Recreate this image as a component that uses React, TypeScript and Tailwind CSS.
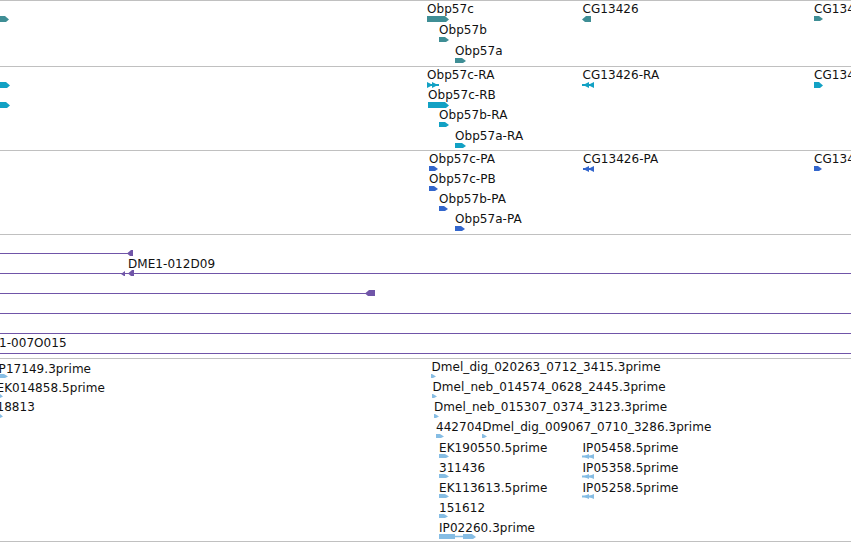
import React from "react";

type Kind = "fwd" | "rev" | "fwd2" | "rev2" | "split";
type Feat = { x: number; y: number; w: number; h: number; k: Kind };
type Lab = { x: number; c: number; t: string };

function Shape({ k, w, h }: { k: Kind; w: number; h: number }) {
  const m = h / 2;
  if (k === "fwd") {
    const a = Math.max(0, w - 4);
    return <polygon points={`0,0 ${a},0 ${w},${m + 0.5} ${Math.max(0, w - 3)},${h} 0,${h}`} />;
  }
  if (k === "rev") {
    const a = Math.min(w, 4);
    return <polygon points={`${w},0 ${a},0 0,${m + 0.5} ${Math.min(w, 3)},${h} ${w},${h}`} />;
  }
  if (k === "fwd2") {
    return (
      <>
        <rect x={0} y={m - 1} width={w} height={2} />
        <polygon points={`0,0 6,${m} 0,${h}`} />
        <polygon points={`5,0 11,${m} 5,${h}`} />
      </>
    );
  }
  if (k === "rev2") {
    return (
      <>
        <rect x={0} y={m - 1} width={w} height={2} />
        <polygon points={`${w},0 ${w - 6},${m} ${w},${h}`} />
        <polygon points={`${w - 5},0 ${w - 11},${m} ${w - 5},${h}`} />
      </>
    );
  }
  return (
    <>
      <polygon points={`0,0 16,0 16,${h} 0,${h}`} />
      <rect x={16} y={m - 0.75} width={8} height={1.5} />
      <polygon points={`24,0 ${w - 4},0 ${w},${m + 0.5} ${w - 3},${h} 24,${h}`} />
    </>
  );
}

function Features({ feats, top, color }: { feats: Feat[]; top: number; color: string }) {
  return (
    <>
      {feats.map((f, i) => (
        <svg
          key={i}
          className="absolute"
          style={{ left: f.x, top: f.y - top }}
          width={f.w}
          height={f.h}
          fill={color}
        >
          <Shape k={f.k} w={f.w} h={f.h} />
        </svg>
      ))}
    </>
  );
}

function Labels({ labels, top }: { labels: Lab[]; top: number }) {
  return (
    <>
      {labels.map((l, i) => (
        <span
          key={i}
          className="absolute whitespace-nowrap text-[12px] leading-[14px] tracking-[0.05px] text-[#111] font-['DejaVu_Sans',sans-serif]"
          style={{ left: l.x, top: l.c - 2.4 - top }}
        >
          {l.t}
        </span>
      ))}
    </>
  );
}

const TEAL = "#3f8e95";
const CYAN = "#12a1c4";
const BLUE = "#3366cc";
const PURPLE = "#7055a8";
const LBLUE = "#86bde4";

const t1Feats: Feat[] = [
  { x: 0, y: 16, w: 9, h: 6, k: "fwd" },
  { x: 427, y: 16, w: 22, h: 6, k: "fwd" },
  { x: 439, y: 37, w: 10, h: 5, k: "fwd" },
  { x: 455, y: 58, w: 11, h: 5, k: "fwd" },
  { x: 582, y: 16, w: 9, h: 6, k: "rev" },
  { x: 814, y: 16, w: 9, h: 5, k: "fwd" },
];
const t1Labels: Lab[] = [
  { x: 427, c: 4, t: "Obp57c" },
  { x: 439, c: 25.5, t: "Obp57b" },
  { x: 455, c: 46.5, t: "Obp57a" },
  { x: 582.5, c: 4, t: "CG13426" },
  { x: 814, c: 4, t: "CG13427" },
];

const t2Feats: Feat[] = [
  { x: 0, y: 82, w: 10, h: 6, k: "fwd" },
  { x: 0, y: 102, w: 10, h: 6, k: "fwd" },
  { x: 427, y: 82, w: 12, h: 6, k: "fwd2" },
  { x: 428, y: 102, w: 21, h: 6, k: "fwd" },
  { x: 439, y: 122, w: 10, h: 5, k: "fwd" },
  { x: 455, y: 143, w: 11, h: 5, k: "fwd" },
  { x: 582, y: 82, w: 12, h: 6, k: "rev2" },
  { x: 814, y: 82, w: 9, h: 6, k: "fwd" },
];
const t2Labels: Lab[] = [
  { x: 427, c: 70, t: "Obp57c-RA" },
  { x: 428, c: 90.5, t: "Obp57c-RB" },
  { x: 439, c: 110.5, t: "Obp57b-RA" },
  { x: 455, c: 131, t: "Obp57a-RA" },
  { x: 582.5, c: 70, t: "CG13426-RA" },
  { x: 814, c: 70, t: "CG13427-RA" },
];

const t3Feats: Feat[] = [
  { x: 429, y: 166, w: 9, h: 5, k: "fwd" },
  { x: 429, y: 186, w: 9, h: 5, k: "fwd" },
  { x: 439, y: 206, w: 9, h: 5, k: "fwd" },
  { x: 455, y: 226, w: 10, h: 5, k: "fwd" },
  { x: 583, y: 166, w: 11, h: 6, k: "rev2" },
  { x: 814, y: 166, w: 8, h: 5, k: "fwd" },
];
const t3Labels: Lab[] = [
  { x: 429, c: 154.5, t: "Obp57c-PA" },
  { x: 429, c: 174.5, t: "Obp57c-PB" },
  { x: 439, c: 194.5, t: "Obp57b-PA" },
  { x: 455, c: 214.5, t: "Obp57a-PA" },
  { x: 583, c: 154.5, t: "CG13426-PA" },
  { x: 814, c: 154.5, t: "CG13427-PA" },
];

const t4Lines = [
  { y: 253, x: 0, w: 128 },
  { y: 273, x: 0, w: 851 },
  { y: 293, x: 0, w: 366 },
  { y: 313, x: 0, w: 851 },
  { y: 333, x: 0, w: 851 },
  { y: 353, x: 0, w: 851 },
];
const t4Feats: Feat[] = [
  { x: 127, y: 250, w: 6, h: 6, k: "rev" },
  { x: 121, y: 271, w: 4, h: 5, k: "rev" },
  { x: 128, y: 270, w: 6, h: 6, k: "rev" },
  { x: 365, y: 290, w: 10, h: 6, k: "rev" },
];
const t4Labels: Lab[] = [
  { x: 128, c: 259, t: "DME1-012D09" },
  { x: -1, c: 338, t: "1-007O015" },
];

const t5Feats: Feat[] = [
  { x: 0, y: 374, w: 8, h: 4, k: "fwd" },
  { x: 0, y: 394, w: 3, h: 4, k: "fwd" },
  { x: 0, y: 414, w: 3, h: 4, k: "fwd" },
  { x: 431, y: 374, w: 5, h: 4, k: "fwd" },
  { x: 432, y: 394, w: 5, h: 4, k: "fwd" },
  { x: 434, y: 414, w: 5, h: 4, k: "fwd" },
  { x: 436, y: 434, w: 8, h: 4, k: "fwd" },
  { x: 482, y: 434, w: 5, h: 4, k: "fwd" },
  { x: 439, y: 454, w: 10, h: 4, k: "fwd" },
  { x: 439, y: 474, w: 10, h: 4, k: "fwd" },
  { x: 439, y: 494, w: 10, h: 4, k: "fwd" },
  { x: 439, y: 514, w: 9, h: 4, k: "fwd" },
  { x: 582, y: 454, w: 12, h: 5, k: "rev2" },
  { x: 582, y: 474, w: 12, h: 5, k: "rev2" },
  { x: 582, y: 494, w: 12, h: 5, k: "rev2" },
  { x: 439, y: 534, w: 37, h: 5, k: "split" },
];
const t5Labels: Lab[] = [
  { x: -5, c: 364, t: "IP17149.3prime" },
  { x: -3.5, c: 383.5, t: "EK014858.5prime" },
  { x: -3.5, c: 402, t: "18813" },
  { x: 431.5, c: 362.5, t: "Dmel_dig_020263_0712_3415.3prime" },
  { x: 432.5, c: 382.5, t: "Dmel_neb_014574_0628_2445.3prime" },
  { x: 434, c: 402.5, t: "Dmel_neb_015307_0374_3123.3prime" },
  { x: 436, c: 422.5, t: "442704" },
  { x: 482.3, c: 422.5, t: "Dmel_dig_009067_0710_3286.3prime" },
  { x: 439, c: 443, t: "EK190550.5prime" },
  { x: 582.5, c: 443, t: "IP05458.5prime" },
  { x: 439, c: 463, t: "311436" },
  { x: 582.5, c: 463, t: "IP05358.5prime" },
  { x: 439, c: 483, t: "EK113613.5prime" },
  { x: 582.5, c: 483, t: "IP05258.5prime" },
  { x: 439, c: 503, t: "151612" },
  { x: 439, c: 523, t: "IP02260.3prime" },
];

export default function App() {
  return (
    <div className="w-[851px] h-[542px] overflow-hidden bg-white flex flex-col">
      <div className="h-px shrink-0 bg-[#c0c0c0]" />
      <div className="relative shrink-0 h-[66px] border-b border-[#c0c0c0]">
        <Features feats={t1Feats} top={1} color={TEAL} />
        <Labels labels={t1Labels} top={1} />
      </div>
      <div className="relative shrink-0 h-[84px] border-b border-[#c0c0c0]">
        <Features feats={t2Feats} top={67} color={CYAN} />
        <Labels labels={t2Labels} top={67} />
      </div>
      <div className="relative shrink-0 h-[84px] border-b border-[#c0c0c0]">
        <Features feats={t3Feats} top={151} color={BLUE} />
        <Labels labels={t3Labels} top={151} />
      </div>
      <div className="relative shrink-0 h-[124px] border-b border-[#c0c0c0]">
        {t4Lines.map((l, i) => (
          <div
            key={i}
            className="absolute h-px bg-[#7055a8]"
            style={{ left: l.x, top: l.y - 235, width: l.w }}
          />
        ))}
        <Features feats={t4Feats} top={235} color={PURPLE} />
        <Labels labels={t4Labels} top={235} />
      </div>
      <div className="relative shrink-0 h-[183px] border-b border-[#c0c0c0]">
        <Features feats={t5Feats} top={359} color={LBLUE} />
        <Labels labels={t5Labels} top={359} />
      </div>
    </div>
  );
}
